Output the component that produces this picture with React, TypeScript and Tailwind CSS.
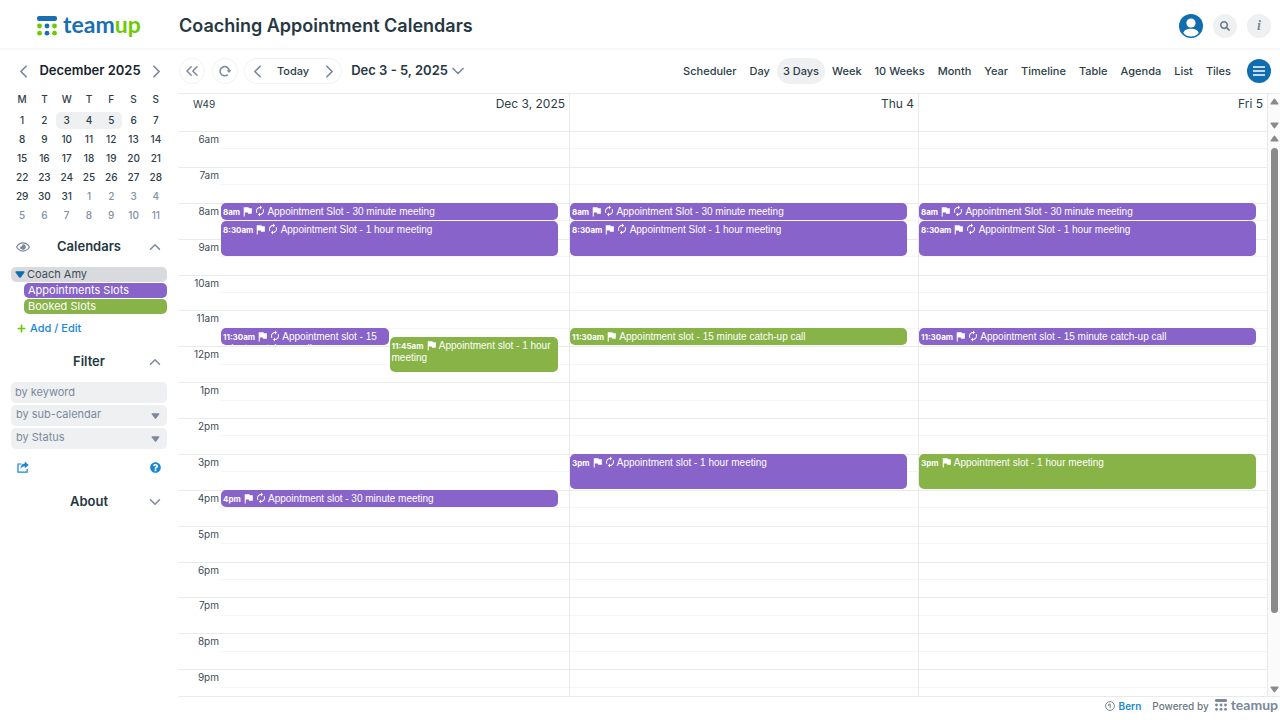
import React from 'react';
import { ChevronDown, ChevronLeft, ChevronRight, ChevronUp, ChevronsLeft } from 'lucide-react';
import { FaPlus, FaQuestionCircle, FaRegEye, FaSearch } from 'react-icons/fa';
import { MdAutorenew, MdFlag } from 'react-icons/md';

interface CalendarEvent {
  time: string;
  title: string;
  start: number;
  duration: number;
  color: 'purple' | 'green';
  recurring?: boolean;
  lane?: number;
  lanes?: number;
}

interface CalendarDay {
  label: string;
  events: CalendarEvent[];
}

const FIRST_HOUR = 6;

const hours = [
  '6am', '7am', '8am', '9am', '10am', '11am', '12pm', '1pm',
  '2pm', '3pm', '4pm', '5pm', '6pm', '7pm', '8pm', '9pm',
];

const views = [
  'Scheduler', 'Day', '3 Days', 'Week', '10 Weeks', 'Month',
  'Year', 'Timeline', 'Table', 'Agenda', 'List', 'Tiles',
];

const weeks = [
  [1, 2, 3, 4, 5, 6, 7],
  [8, 9, 10, 11, 12, 13, 14],
  [15, 16, 17, 18, 19, 20, 21],
  [22, 23, 24, 25, 26, 27, 28],
  [29, 30, 31, 1, 2, 3, 4],
  [5, 6, 7, 8, 9, 10, 11],
];

const days: CalendarDay[] = [
  {
    label: 'Dec 3, 2025',
    events: [
      { time: '8am', title: 'Appointment Slot - 30 minute meeting', start: 8, duration: 0.5, color: 'purple', recurring: true },
      { time: '8:30am', title: 'Appointment Slot - 1 hour meeting', start: 8.5, duration: 1, color: 'purple', recurring: true },
      { time: '11:30am', title: 'Appointment slot - 15 minute catch-up call', start: 11.5, duration: 0.5, color: 'purple', recurring: true, lane: 0, lanes: 2 },
      { time: '11:45am', title: 'Appointment slot - 1 hour meeting', start: 11.75, duration: 1, color: 'green', lane: 1, lanes: 2 },
      { time: '4pm', title: 'Appointment slot - 30 minute meeting', start: 16, duration: 0.5, color: 'purple', recurring: true },
    ],
  },
  {
    label: 'Thu 4',
    events: [
      { time: '8am', title: 'Appointment Slot - 30 minute meeting', start: 8, duration: 0.5, color: 'purple', recurring: true },
      { time: '8:30am', title: 'Appointment Slot - 1 hour meeting', start: 8.5, duration: 1, color: 'purple', recurring: true },
      { time: '11:30am', title: 'Appointment slot - 15 minute catch-up call', start: 11.5, duration: 0.5, color: 'green' },
      { time: '3pm', title: 'Appointment slot - 1 hour meeting', start: 15, duration: 1, color: 'purple', recurring: true },
    ],
  },
  {
    label: 'Fri 5',
    events: [
      { time: '8am', title: 'Appointment Slot - 30 minute meeting', start: 8, duration: 0.5, color: 'purple', recurring: true },
      { time: '8:30am', title: 'Appointment Slot - 1 hour meeting', start: 8.5, duration: 1, color: 'purple', recurring: true },
      { time: '11:30am', title: 'Appointment slot - 15 minute catch-up call', start: 11.5, duration: 0.5, color: 'purple', recurring: true },
      { time: '3pm', title: 'Appointment slot - 1 hour meeting', start: 15, duration: 1, color: 'green' },
    ],
  },
];

const LogoMark: React.FC<{ className: string; dots: string }> = ({ className, dots }) => (
  <svg viewBox="0 0 20 20" className={className} aria-hidden="true">
    <rect x="0" y="0" width="20" height="5" rx="2" fill="currentColor" />
    <circle cx="2.5" cy="10" r="2.4" fill={dots} />
    <circle cx="10" cy="10" r="2.4" fill="currentColor" />
    <circle cx="17.5" cy="10" r="2.4" fill={dots} />
    <circle cx="2.5" cy="17.2" r="2.4" fill={dots} />
    <circle cx="10" cy="17.2" r="2.4" fill="currentColor" />
    <circle cx="17.5" cy="17.2" r="2.4" fill={dots} />
  </svg>
);

const Triangle: React.FC<{ up?: boolean; className?: string }> = ({ up, className }) => (
  <svg viewBox="0 0 10 7" className={className} aria-hidden="true">
    <path
      d={up ? 'M4.2 .6Q5 -.2 5.8 .6L9.4 5.6Q9.8 6.8 8.8 6.8H1.2Q.2 6.8 .6 5.6Z' : 'M4.2 6.4Q5 7.2 5.8 6.4L9.4 1.4Q9.8 .2 8.8 .2H1.2Q.2 .2 .6 1.4Z'}
      fill="currentColor"
    />
  </svg>
);

const Header = () => (
  <header className="flex h-[50px] shrink-0 items-center border-b-2 border-[#f6f7f8]">
    <a href="#home" className="flex w-[179px] shrink-0 items-center pl-[37px] text-[#1870b3]">
      <LogoMark className="mt-[3px] h-5 w-5" dots="#6ccb00" />
      <span className="ml-[6px] font-[Lato,sans-serif] text-[23px] leading-6 font-bold">
        team<span className="text-[#6ccb00]">up</span>
      </span>
    </a>
    <h1 className="flex-1 pt-[3px] text-[18px] font-semibold text-[#263842]">Coaching Appointment Calendars</h1>
    <div className="flex items-center gap-[10px] pt-1 pr-[9px]">
      <button aria-label="Account" className="h-6 w-6 rounded-full">
        <svg viewBox="0 0 24 24" className="h-6 w-6">
          <circle cx="12" cy="12" r="12" fill="#106eb0" />
          <circle cx="12" cy="9" r="4.6" fill="#fff" />
          <path d="M4.3 19c1-3.2 4-4.3 7.7-4.3s6.7 1.1 7.7 4.3c-2 2.3-4.6 3.6-7.7 3.6S6.3 21.3 4.3 19z" fill="#fff" />
        </svg>
      </button>
      <button aria-label="Search" className="flex h-6 w-6 items-center justify-center rounded-full bg-[#eef0f2] text-[#6c7885]">
        <FaSearch className="h-[10px] w-[10px]" />
      </button>
      <button aria-label="Info" className="flex h-6 w-6 items-center justify-center rounded-full bg-[#eef0f2] font-['Liberation_Serif',serif] text-[14px] leading-none font-bold text-[#7a8696] italic">
        i
      </button>
    </div>
  </header>
);

const MiniCalendar = () => (
  <section>
    <div className="flex h-[42px] items-center justify-between pl-[2px] text-[#7b879d]">
      <button aria-label="Previous month"><ChevronLeft className="h-[21px] w-[21px]" /></button>
      <h2 className="text-[13px] font-semibold text-[#17242c]">December 2025</h2>
      <button aria-label="Next month"><ChevronRight className="h-[21px] w-[21px]" /></button>
    </div>
    <table className="w-full table-fixed border-separate border-spacing-0 text-center text-[10px] font-medium text-[#2d3e48]">
      <thead>
        <tr className="h-[19px]">
          {['M', 'T', 'W', 'T', 'F', 'S', 'S'].map((d, i) => (
            <th key={i} className="p-0 pb-1 font-medium">{d}</th>
          ))}
        </tr>
      </thead>
      <tbody>
        {weeks.map((week, row) => (
          <tr key={row} className="h-[19px]">
            {week.map((date, col) => {
              const nextMonth = (row === 4 && col > 2) || row === 5;
              const active = row === 0 && col > 1 && col < 5;
              return (
                <td key={col} className={`p-0 ${nextMonth ? 'text-[#8490a4]' : ''}`}>
                  <div className={`h-[17px] leading-[17px] ${active ? 'bg-[#eef0f2]' : ''} ${active && col === 2 ? 'rounded-l-[5px]' : ''} ${active && col === 4 ? 'rounded-r-[5px]' : ''}`}>
                    {date}
                  </div>
                </td>
              );
            })}
          </tr>
        ))}
      </tbody>
    </table>
  </section>
);

const SectionHeading: React.FC<{ title: string; open?: boolean; leading?: React.ReactNode }> = ({ title, open, leading }) => (
  <div className="grid h-[18px] grid-cols-[18px_1fr_18px] items-center px-[3px] text-[#7b879d]">
    {leading}
    <h2 className="col-start-2 text-center text-[13px] font-semibold text-[#263842]">{title}</h2>
    <button aria-label={`Toggle ${title}`}>
      {open ? <ChevronUp className="h-[18px] w-[18px]" /> : <ChevronDown className="h-[18px] w-[18px]" />}
    </button>
  </div>
);

const Sidebar = () => (
  <aside className="flex w-[179px] shrink-0 flex-col pr-3 pl-[11px] text-[11px] text-[#3d4b56]">
    <MiniCalendar />

    <div className="mt-3">
      <SectionHeading
        title="Calendars"
        open
        leading={
          <button aria-label="Toggle all calendars" className="flex justify-center">
            <FaRegEye className="h-[14px] w-[14px]" />
          </button>
        }
      />
    </div>
    <div className="mt-3 flex flex-col gap-px">
      <button className="flex h-[15px] items-center gap-[2px] rounded-[5px] bg-[#d8dadd] pl-1">
        <Triangle className="h-[7px] w-[10px] text-[#106eb0]" />
        Coach Amy
      </button>
      <button className="ml-[13px] flex h-[15px] items-center rounded-[5px] bg-[#8763ca] pl-1 text-white">Appointments Slots</button>
      <button className="ml-[13px] flex h-[15px] items-center rounded-[5px] bg-[#88b347] pl-1 text-white">Booked Slots</button>
    </div>
    <a href="#edit" className="mt-[6px] flex h-4 items-center gap-1 pl-[6px] font-medium text-[#1787d6]">
      <FaPlus className="h-[9px] w-[9px] text-[#6ccb00]" />
      Add / Edit
    </a>

    <div className="mt-4">
      <SectionHeading title="Filter" open />
    </div>
    <div className="mt-3 flex flex-col gap-[2px] text-[#7d899b]">
      <input
        aria-label="Filter by keyword"
        placeholder="by keyword"
        className="h-[21px] w-full rounded-[5px] bg-[#eef0f2] px-1 pb-px placeholder:text-[#7d899b]"
      />
      {['by sub-calendar', 'by Status'].map((label) => (
        <div key={label} className="relative">
          <select aria-label={`Filter ${label}`} className="block h-[21px] w-full appearance-none rounded-[5px] bg-[#eef0f2] px-[5px] pb-[2px]">
            <option>{label}</option>
          </select>
          <Triangle className="pointer-events-none absolute top-2 right-[7px] h-[6px] w-[9px]" />
        </div>
      ))}
    </div>
    <div className="mt-3 flex items-center justify-between px-[6px] text-[#1787d6]">
      <button aria-label="Share">
        <svg viewBox="0 0 12 12" className="h-3 w-3">
          <path d="M4.5 3H1v8.2h9.2V8" fill="none" stroke="currentColor" strokeWidth="1.2" />
          <path d="M7.8 .6L11.7 3.9 7.8 7.2V5.3C5.8 5.3 4.5 6 3.6 8.2 3.4 4.800 5 2.7 7.8 2.5z" fill="currentColor" />
        </svg>
      </button>
      <button aria-label="Help"><FaQuestionCircle className="h-[11px] w-[11px]" /></button>
    </div>

    <div className="mt-[19px]">
      <SectionHeading title="About" />
    </div>
  </aside>
);

const Toolbar = () => (
  <div className="flex h-[43px] shrink-0 items-center pr-[9px] pb-px text-[11px] font-medium text-[#2d3e48]">
    <button aria-label="Hide sidebar" className="flex h-[26px] w-[26px] items-center justify-center rounded-full border border-[#f1f2f4] text-[#7b879d]">
      <ChevronsLeft className="h-[20px] w-[20px] shrink-0" strokeWidth={1.75} />
    </button>
    <button aria-label="Refresh" className="ml-[7px] flex h-[26px] w-[26px] items-center justify-center rounded-full border border-[#f1f2f4] text-[#7b879d]">
      <svg viewBox="0 0 12 12" className="h-3 w-3">
        <path d="M8.8 9.6A4.6 4.6 0 1 1 10.2 5.5" fill="none" stroke="currentColor" strokeWidth="1.5" />
        <path d="M7.7 5.3h4.6L10 8z" fill="currentColor" />
      </svg>
    </button>
    <div className="ml-[6px] flex h-[26px] items-center rounded-full border border-[#f1f2f4]">
      <button aria-label="Previous" className="flex w-6 justify-center text-[#7b879d]"><ChevronLeft className="h-[21px] w-[21px]" /></button>
      <button className="px-2">Today</button>
      <button aria-label="Next" className="flex w-6 justify-center text-[#7b879d]"><ChevronRight className="h-[21px] w-[21px]" /></button>
    </div>
    <button className="ml-[9px] flex items-center text-[13px] font-semibold text-[#263842]">
      Dec 3 - 5, 2025
      <ChevronDown className="h-[20px] w-[20px] text-[#7b879d]" />
    </button>
    <nav className="ml-auto flex items-center gap-px">
      {views.map((view) => (
        <button key={view} className={`h-[26px] rounded-full px-[6px] ${view === '3 Days' ? 'bg-[#eef0f2]' : ''}`}>
          {view}
        </button>
      ))}
    </nav>
    <button aria-label="Menu" className="ml-[10px] flex h-6 w-6 items-center justify-center rounded-full bg-[#106eb0]">
      <svg viewBox="0 0 12 10" className="h-[10px] w-3">
        <path d="M0 1h12M0 5h12M0 9h12" stroke="#fff" strokeWidth="1.6" />
      </svg>
    </button>
  </div>
);

const EventCard: React.FC<{ event: CalendarEvent }> = ({ event }) => {
  const { lane = 0, lanes = 1 } = event;
  return (
    <button
      className={`absolute flex items-start overflow-hidden rounded-[5px] px-[2px] pt-[3px] text-left text-white ${event.color === 'purple' ? 'bg-[#8763ca]' : 'bg-[#88b347]'}`}
      style={{
        top: `${((event.start - FIRST_HOUR) / hours.length) * 100}%`,
        height: `calc(${(event.duration / hours.length) * 100}% - 1px)`,
        left: `${(lane / lanes) * 100}%`,
        width: `calc(${100 / lanes}% - ${lane < lanes - 1 ? 1 : 0}px)`,
      }}
    >
      <span className="block font-['Liberation_Sans',sans-serif] text-[10px] leading-3">
        <span className="font-[Inter,sans-serif] text-[8px] leading-3 font-bold">{event.time}</span>
        <MdFlag className={`-my-1 ml-px inline h-[13px] w-[13px] align-[1px] ${event.recurring ? '' : '-mr-px'}`} />
        {event.recurring && <MdAutorenew className="-my-1 -mr-px inline h-3 w-3 align-[2px]" />}{' '}
        {event.title}
      </span>
    </button>
  );
};

const Grid = () => (
  <div className="flex min-h-0 flex-1 border-y border-[#e9eaec]">
    <div className="relative flex min-w-0 flex-1 flex-col">
      <div className="flex h-[37px] shrink-0 text-[12px] leading-5 text-[#2d3e48]">
        <div className="w-[42px] shrink-0 pl-[14px] text-[10px]">W49</div>
        {days.map((day) => (
          <div key={day.label} className="flex-1 border-r border-[#e9eaec] pr-1 text-right">{day.label}</div>
        ))}
      </div>
      <div className="min-h-0 flex-1 overflow-hidden">
        <div className="relative h-[574px]">
          <div className="grid h-full grid-rows-16">
            {hours.map((hour) => (
              <div key={hour} className="flex border-t border-[#e9eaec]">
                <div className="w-[42px] shrink-0 pr-[2px] text-right text-[10px] leading-[14px] text-[#3d4b56]">{hour}</div>
                <div className="h-1/2 flex-1 border-b border-[#f4f5f6]" />
              </div>
            ))}
          </div>
          {/* Day columns lie over the hour lines */}
          <div className="absolute inset-0 flex pl-[42px]">
            {days.map((day) => (
              <div key={day.label} className="h-full flex-1 border-r border-[#e9eaec] pr-[11px]">
                <div className="relative h-full">
                  {day.events.map((event) => (
                    <EventCard key={event.time} event={event} />
                  ))}
                </div>
              </div>
            ))}
          </div>
        </div>
      </div>
    </div>
    {/* Scrollbars */}
    <div className="flex w-3 shrink-0 flex-col items-center bg-[#fbfbfb] text-[#8a8a8a]">
      <div className="flex h-[37px] shrink-0 flex-col justify-between pt-1 pb-[2px]">
        <Triangle up className="h-[7px] w-[9px]" />
        <Triangle className="h-[7px] w-[9px]" />
      </div>
      <div className="flex min-h-0 flex-1 flex-col items-center pt-1 pb-[3px]">
        <Triangle up className="h-[7px] w-[9px] shrink-0" />
        <div className="mt-[6px] h-10/12 w-[7px] rounded-full bg-[#8a8a8a]" />
        <Triangle className="mt-auto h-[7px] w-[9px] shrink-0" />
      </div>
    </div>
  </div>
);

const Footer = () => (
  <footer className="flex h-[23px] shrink-0 items-center justify-end pr-[2px] pb-[5px] text-[10px] text-[#6c7885]">
    <svg viewBox="0 0 10 10" className="h-[10px] w-[10px]">
      <circle cx="5" cy="5" r="4.4" fill="none" stroke="currentColor" strokeWidth="0.9" />
      <path d="M3.7 3.2L5.2 3v4.3M3.7 3.2v1.8" fill="none" stroke="currentColor" strokeWidth="0.9" />
    </svg>
    <a href="#timezone" className="ml-1 font-semibold text-[#1787d6]">Bern</a>
    <span className="ml-[11px] font-medium">Powered by</span>
    <a href="#teamup" className="ml-[6px] flex items-center gap-1 pb-[2px] text-[#7b879d]">
      <LogoMark className="h-3 w-3" dots="currentColor" />
      <span className="pb-px font-[Lato,sans-serif] text-[14px] leading-4 font-bold">teamup</span>
    </a>
  </footer>
);

export default function App() {
  return (
    <div className="flex h-screen flex-col overflow-hidden bg-white font-[Inter,sans-serif]">
      <Header />
      <div className="flex min-h-0 flex-1">
        <Sidebar />
        <main className="flex min-w-0 flex-1 flex-col">
          <Toolbar />
          <Grid />
          <Footer />
        </main>
      </div>
    </div>
  );
}
